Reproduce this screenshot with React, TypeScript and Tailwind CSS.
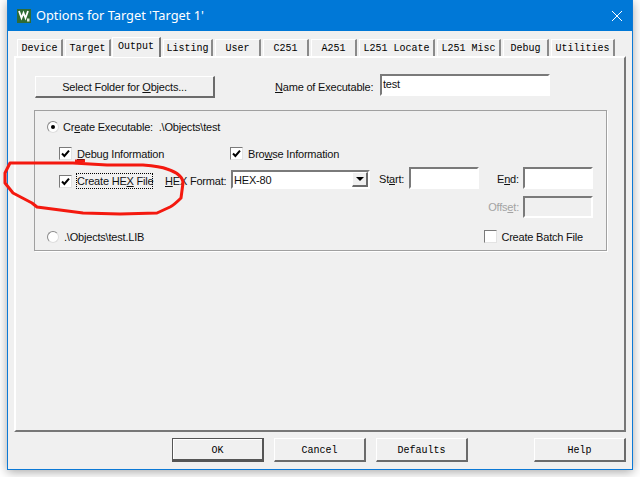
import type { ReactNode } from 'react';

const ui = "font-['Liberation_Sans',Arial,sans-serif] text-[11px] tracking-[-0.2px] leading-[14px] text-[#111]";
const sunken = 'border-2 border-t-[#7a7a7a] border-l-[#7a7a7a] border-r-white border-b-white';
const raised = 'border border-t-white border-l-white border-r-2 border-b-2 border-r-[#6b6b6b] border-b-[#6b6b6b]';
const dosFont = "font-['Liberation_Mono',monospace] text-[10px]";

const tabs = [
  { label: 'Device', width: 'w-[46px]' },
  { label: 'Target', width: 'w-[46px]' },
  { label: 'Output', width: 'w-[49px]', active: true },
  { label: 'Listing', width: 'w-[50px]' },
  { label: 'User', width: 'w-[46px]' },
  { label: 'C251', width: 'w-[46px]' },
  { label: 'A251', width: 'w-[46px]' },
  { label: 'L251 Locate', width: 'w-[76px]' },
  { label: 'L251 Misc', width: 'w-[64px]' },
  { label: 'Debug', width: 'w-[46px]' },
  { label: 'Utilities', width: 'w-[64px]' },
];

function U({ children }: { children: ReactNode }) {
  return <span className="underline underline-offset-1">{children}</span>;
}

function Check({ on, className = '' }: { on?: boolean; className?: string }) {
  return (
    <span className={`flex h-[13px] w-[13px] shrink-0 items-center justify-center border border-t-[#7a7a7a] border-l-[#7a7a7a] border-r-[#e3e3e3] border-b-[#e3e3e3] bg-white ${className}`}>
      {on && (
        <svg width="9" height="9" viewBox="0 0 9 9">
          <path d="M1 4.5 L3.4 7 L8 1.6" fill="none" stroke="#000" strokeWidth="2" />
        </svg>
      )}
    </span>
  );
}

function Radio({ on }: { on?: boolean }) {
  return (
    <span className="flex h-[12px] w-[12px] shrink-0 items-center justify-center rounded-full border border-[#8a8a8a] border-r-[#ddd] border-b-[#ddd] bg-white">
      {on && <span className="h-[4px] w-[4px] rounded-full bg-black" />}
    </span>
  );
}

function DialogButton({ label, className }: { label: string; className: string }) {
  return <button className={`h-[24px] w-[92px] pt-[2px] ${dosFont} text-black ${className}`}>{label}</button>;
}

function AppIcon() {
  return (
    <svg width="14" height="14" viewBox="0 0 14 14" className="ml-[9px] shrink-0">
      <rect width="14" height="14" fill="#2f6b34" />
      <path d="M2 2 L4.5 9 L6.5 4 L8.5 9 L11 2" fill="none" stroke="#fff" strokeWidth="1.8" />
      <rect x="10" y="9.5" width="2.5" height="3" fill="#dfe9df" />
    </svg>
  );
}

export default function App() {
  return (
    <div className="relative h-[477px] w-[640px] overflow-hidden bg-white">
      <div className="ml-[7px] flex h-[470px] w-[626px] flex-col border border-t-0 border-[#0c79d6] bg-[#f0f0f0] shadow-[0_2px_10px_rgba(0,0,0,0.35)]">
        {/* Title bar */}
        <div className="flex h-[31px] shrink-0 items-center bg-[#0078d7] text-white">
          <AppIcon />
          <span className="ml-[5px] font-['Noto_Sans',sans-serif] text-[12.8px]">Options for Target 'Target 1'</span>
          <svg width="12" height="12" viewBox="0 0 12 12" className="ml-auto mr-[9px]">
            <path d="M1 1 L11 11 M11 1 L1 11" stroke="#fff" strokeWidth="1" />
          </svg>
        </div>

        {/* Tabs */}
        <div className="mt-[6px] flex h-[19px] items-end pl-[9px]">
          {tabs.map((t, i) => (
            <div
              key={t.label}
              className={`${t.width} ${dosFont} flex items-center justify-center text-black ${i > 0 && !t.active ? 'ml-[2px]' : ''} ${t.active ? 'relative z-10 ml-px -mb-[1px] h-[20px] border-t border-l border-white border-r-2 border-r-[#777] bg-[#f0f0f0] pb-[2px]' : 'h-[17px] border-t border-l border-white border-r-2 border-r-[#8a8a8a]'}`}
            >
              {t.label}
            </div>
          ))}
        </div>

        {/* Output page */}
        <div className={`${ui} ml-[6px] h-[376px] w-[612px] border-2 border-t-white border-l-white border-r-[#777] border-b-[#777] pt-[16px]`}>
          <div className="flex h-[24px] items-start">
            <button className={`${raised} ml-[19px] mt-[2px] h-[22px] w-[180px]`}>
              Select Folder for <U>O</U>bjects...
            </button>
            <span className="ml-[60px] mt-[6px] w-[105px] whitespace-nowrap">
              <U>N</U>ame of Executable:
            </span>
            <div className={`${sunken} h-[22px] w-[170px] bg-white pl-px pt-px`}>test</div>
          </div>

          <div className="relative ml-[18px] mt-[12px] flex h-[141px] w-[573px] flex-col border border-[#a0a0a0] shadow-[1px_1px_0_#fff]">
            <div className="ml-[12px] mt-[9px] flex h-[14px] items-center">
              <Radio on />
              <span className="ml-[4px] whitespace-pre">
                Cr<U>e</U>ate Executable:  .\Objects\test
              </span>
            </div>

            <div className="ml-[24px] mt-[12px] flex h-[15px] items-center">
              <Check on />
              <span className="ml-[5px] w-[153px]">
                <U>D</U>ebug Information
              </span>
              <Check on />
              <span className="ml-[5px]">
                Bro<U>w</U>se Information
              </span>
            </div>

            <div className="ml-[24px] mt-[6px] flex h-[22px] items-center">
              <Check on className="mt-[6px]" />
              <span className="ml-[4px] mt-[6px] w-[77px] whitespace-nowrap border border-dotted border-black leading-[14px]">
                Create HE<U>X</U> File
              </span>
              <span className="ml-[12px] mt-[6px] w-[66px] whitespace-nowrap">
                <U>H</U>EX Format:
              </span>
              <div className={`${sunken} mt-[3px] flex h-[19px] w-[139px] items-center justify-between bg-white pl-[1px]`}>
                HEX-80
                <span className={`${raised} flex h-[15px] w-[16px] items-center justify-center bg-[#f0f0f0]`}>
                  <span className="h-0 w-0 border-x-[4px] border-t-[4px] border-x-transparent border-t-black" />
                </span>
              </div>
              <span className="ml-[9px] mt-[2px] w-[30px]">
                St<U>a</U>rt:
              </span>
              <div className={`${sunken} h-[22px] w-[70px] bg-white`} />
              <span className="ml-[18px] mt-[2px] w-[26px]">
                E<U>n</U>d:
              </span>
              <div className={`${sunken} h-[22px] w-[70px] bg-white`} />
            </div>

            <div className="mt-[7px] flex h-[22px] items-center justify-end pr-[13px]">
              <span className="mr-[4px] text-[#a3a3a3]">
                Offs<U>e</U>t:
              </span>
              <div className={`${sunken} h-[22px] w-[70px]`} />
            </div>

            <div className="mt-[11px] flex h-[15px] items-center pl-[12px] pr-[23px]">
              <Radio />
              <span className="ml-[5px]">.\Objects\test.LIB</span>
              <span className="ml-auto flex items-center">
                <Check />
                <span className="ml-[4px]">Create Batch File</span>
              </span>
            </div>
          </div>
        </div>

        {/* Footer buttons */}
        <div className="mt-[6px] flex pl-[164px]">
          <DialogButton label="OK" className="border border-[#555] border-b-[3px] border-r-2 shadow-[inset_1px_1px_0_#fff]" />
          <DialogButton label="Cancel" className={`ml-[10px] ${raised}`} />
          <DialogButton label="Defaults" className={`ml-[10px] ${raised}`} />
          <DialogButton label="Help" className={`ml-[66px] ${raised}`} />
        </div>
      </div>

      {/* Red marker annotation drawn over the dialog */}
      <svg width="640" height="477" className="pointer-events-none absolute left-0 top-0">
        <path
          d="M10 163 L 42 163 L 73 163 L 107 165 L 143 165 C 155 166 162 167 167 169 C 176 172 183 176 183 183 L 181 198 C 176 203 172 206 170 207 L 157 213 L 120 214 L 83 213 L 37 207 L 32 203 L 13 193 L 5 183 L 5 173 Z"
          fill="none"
          stroke="#f4190f"
          strokeWidth="3"
          strokeLinejoin="round"
        />
        <path d="M75 161 L 85 161" fill="none" stroke="#f4190f" strokeWidth="3" />
      </svg>
    </div>
  );
}
